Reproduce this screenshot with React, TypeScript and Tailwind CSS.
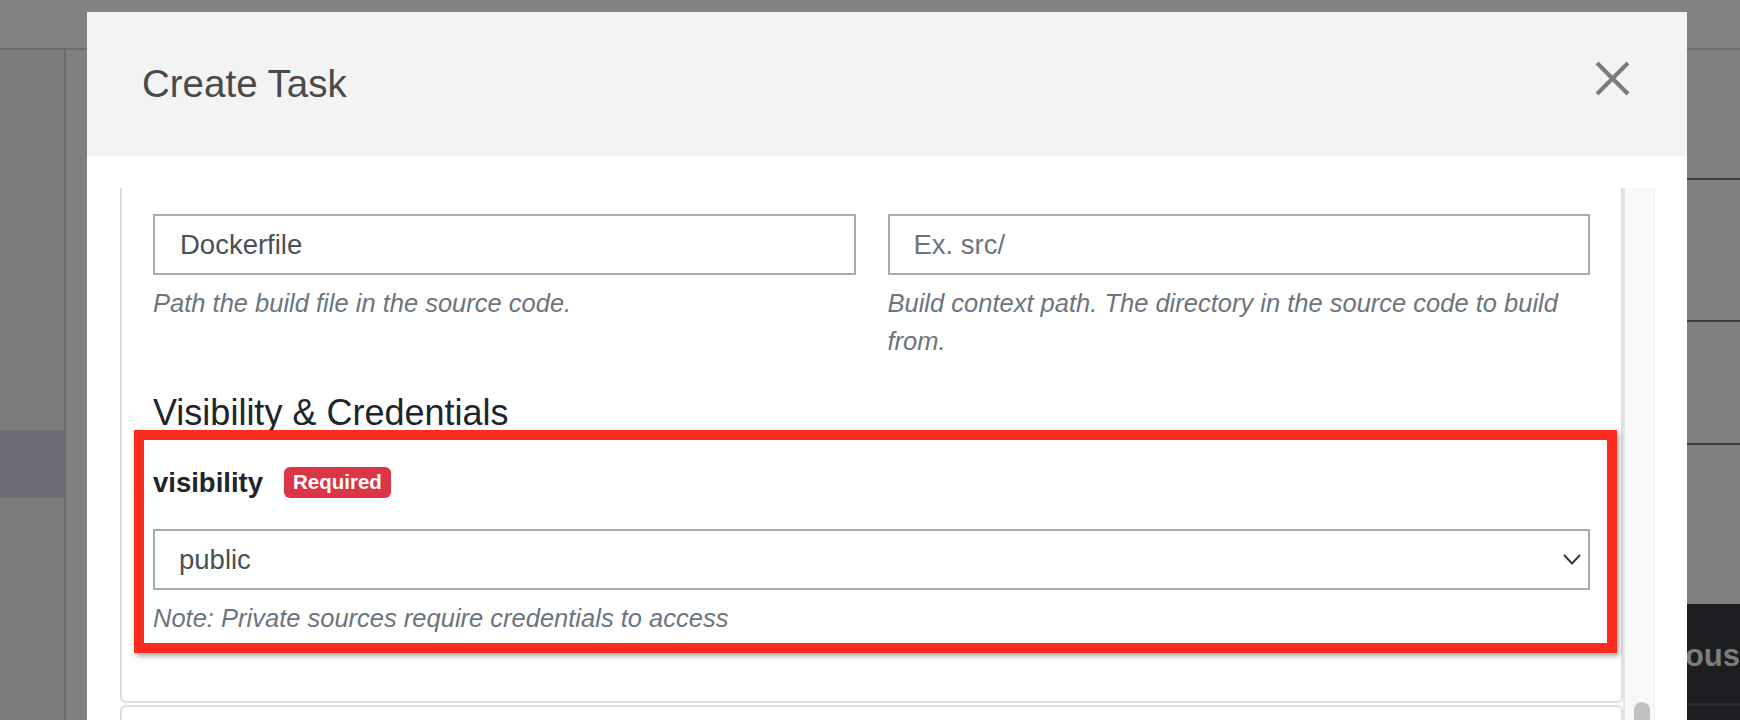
import React from 'react';

const CloseIcon: React.FC = () => (
  <svg width="35" height="35" viewBox="0 0 35 35" fill="none" stroke="#7b7b7b" strokeWidth="4">
    <line x1="2" y1="2" x2="33" y2="33" />
    <line x1="33" y1="2" x2="2" y2="33" />
  </svg>
);

const Chevron: React.FC = () => (
  <svg width="18" height="11" viewBox="0 0 18 11" fill="none" stroke="#343a40" strokeWidth="2">
    <polyline points="1,1 9,9.5 17,1" />
  </svg>
);

// page behind the modal, dimmed by the backdrop
const Backdrop: React.FC = () => (
  <div className="flex h-full flex-col">
    <div className="h-[50px] shrink-0 border-b-2 border-[#6c6c6c] bg-[#828282]" />
    <div className="flex flex-1">
      <aside className="flex w-[66px] shrink-0 flex-col border-r-2 border-[#6a6a6a] bg-[#7c7c7c]">
        <div className="h-[380px]" />
        <div className="h-[68px] bg-[#6e6c79]" />
      </aside>
      <main className="flex flex-1 justify-end">
        <section className="flex w-[520px] flex-col">
          <div className="h-[130px] border-b-2 border-[#3d3d3d]" />
          <div className="h-[142px] border-b-2 border-[#3d3d3d]" />
          <div className="h-[123px] border-b-2 border-[#3d3d3d]" />
          <div className="h-[159px]" />
          <div className="flex flex-1 flex-col bg-[#1c1e21]">
            <div className="flex justify-end pt-[36px] text-[31px] font-bold leading-none text-[#7e7e7e]">
              Previous
            </div>
            <div className="mt-[32px] flex-1 border-t-[3px] border-[#2a2d30]" />
          </div>
        </section>
      </main>
    </div>
  </div>
);

export default function App() {
  return (
    <div className="relative h-[720px] w-[1740px] overflow-hidden bg-[#808080] font-['Liberation_Sans',Arial,sans-serif]">
      <Backdrop />

      {/* Modal */}
      <div className="absolute left-[87px] top-[12px] flex h-[800px] w-[1600px] flex-col bg-white">
        <div className="flex h-[144px] shrink-0 items-center justify-between bg-[#f3f3f3] pl-[55px] pr-[57px]">
          <h2 className="text-[38.5px] font-normal leading-none text-[#4a4a4a]">Create Task</h2>
          <button className="mt-[49px] self-start">
            <CloseIcon />
          </button>
        </div>

        <div className="flex-1 pl-[33px] pr-[32px] pt-[32px]">
          <div className="flex h-[600px] overflow-hidden">
            <div className="flex-1">
              {/* scrolled card */}
              <div className="rounded-b-[6px] border-x-2 border-b-2 border-[#dedede] px-[31px] pb-[64px] pt-[26px]">
                <div className="grid grid-cols-2 gap-x-[32px]">
                  <div>
                    <input
                      readOnly
                      value="Dockerfile"
                      className="h-[61px] w-full border-2 border-[#ababab] bg-white px-[25px] text-[27.5px] text-[#495057] outline-none"
                    />
                    <p className="mt-[9px] text-[25.5px] italic leading-[38px] text-[#6c757d]">
                      Path the build file in the source code.
                    </p>
                  </div>
                  <div>
                    <input
                      readOnly
                      placeholder="Ex. src/"
                      className="h-[61px] w-full border-2 border-[#ababab] bg-white px-[24px] text-[27.5px] text-[#495057] outline-none placeholder:text-[#6c757d]"
                    />
                    <p className="mt-[9px] text-[25.5px] italic leading-[38px] text-[#6c757d]">
                      Build context path. The directory in the source code to build from.
                    </p>
                  </div>
                </div>

                <h3 className="mt-[32px] text-[36px] font-normal leading-[42px] text-[#212529]">
                  Visibility &amp; Credentials
                </h3>

                <div className="relative mt-[28px]">
                  <div className="flex h-[41px] items-center gap-[21px]">
                    <span className="text-[27.5px] font-bold leading-[41px] text-[#212529]">visibility</span>
                    <span className="flex h-[31px] items-center rounded-[6px] bg-[#dc3545] px-[9px] text-[20.5px] font-bold leading-none text-white">
                      Required
                    </span>
                  </div>
                  <button className="mt-[26px] flex h-[61px] w-full items-center justify-between border-2 border-[#ababab] bg-white pl-[24px] pr-[7px]">
                    <span className="text-[27.5px] text-[#495057]">public</span>
                    <Chevron />
                  </button>
                  <p className="mt-[9px] text-[25.5px] italic leading-[38px] text-[#6c757d]">
                    Note: Private sources require credentials to access
                  </p>
                  {/* annotation box */}
                  <div className="pointer-events-none absolute -bottom-[16px] -left-[19px] -right-[27px] -top-[32px] border-[10px] border-[#fc2a1f] shadow-[2px_3px_5px_rgba(0,0,0,0.35)]" />
                </div>
              </div>

              <div className="mt-[2px] h-[60px] rounded-t-[6px] border-x-2 border-t-2 border-[#dedede]" />
            </div>

            {/* scrollbar */}
            <div className="flex w-[32px] shrink-0 flex-col border-l-2 border-r border-l-[#e6e6e6] border-r-[#efefef] bg-[#f8f8f8]">
              <div className="ml-[9px] mt-[514px] h-[120px] w-[16px] rounded-full bg-[#c1c1c1]" />
            </div>
          </div>
        </div>
      </div>
    </div>
  );
}
